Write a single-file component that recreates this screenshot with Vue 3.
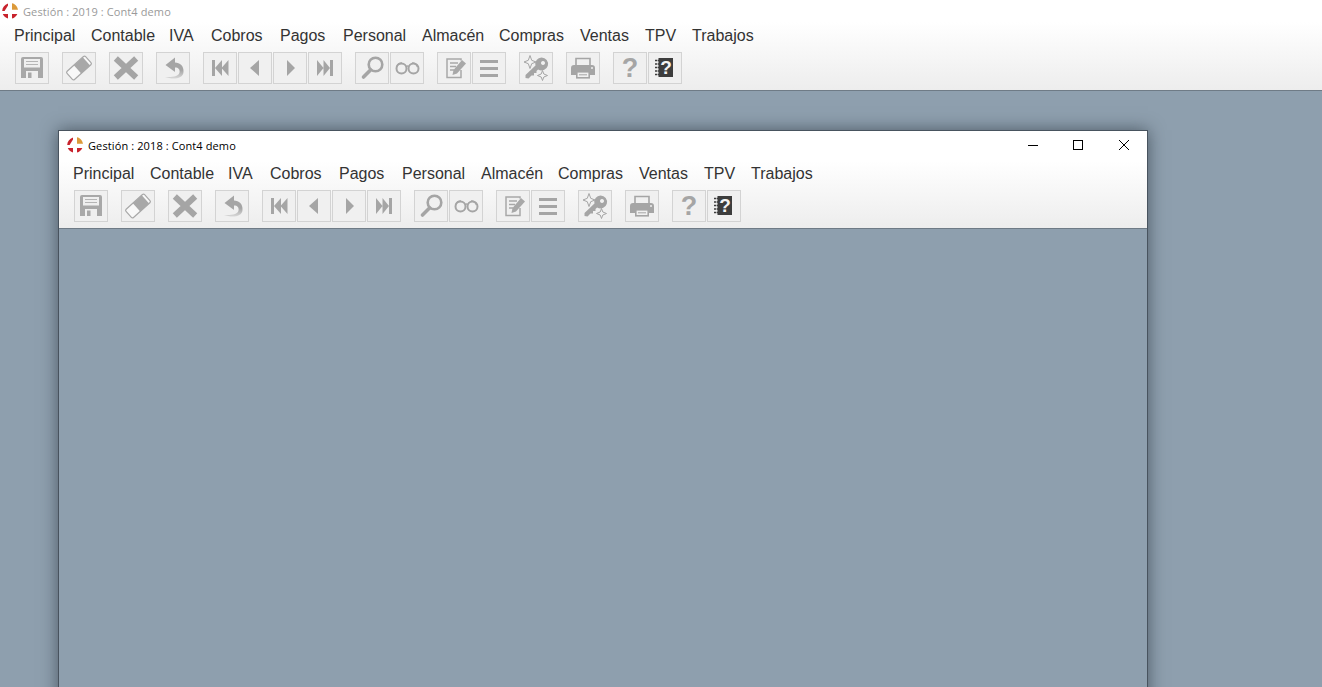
<script setup>
// los dos bloques comparten cabecera: la ventana principal y la ventana hija
const windows = [
  { id: 'main', title: 'Gestión : 2019 : Cont4 demo', child: false },
  { id: 'child', title: 'Gestión : 2018 : Cont4 demo', child: true }
]

const menu = ['Principal', 'Contable', 'IVA', 'Cobros', 'Pagos', 'Personal', 'Almacén', 'Compras', 'Ventas', 'TPV', 'Trabajos']

const toolGroups = [
  ['save'],
  ['eraser'],
  ['cancel'],
  ['undo'],
  ['first', 'prev', 'next', 'last'],
  ['search', 'glasses'],
  ['note', 'list'],
  ['key'],
  ['print'],
  ['help', 'manual']
]
</script>

<template>
  <div class="desktop">
    <svg class="sprites" aria-hidden="true">
      <defs>
        <linearGradient id="undo-fade" x1="0" y1="0" x2="0" y2="1">
          <stop offset="0.6" stop-color="#a5a5a5" />
          <stop offset="1" stop-color="#d8d8d8" />
        </linearGradient>
      </defs>
      <symbol id="logo" viewBox="0 0 16 16">
        <path d="M6 0.6 L6 2.6 L2.6 8 L0.2 8 C0.3 4.6 2.5 1.8 6 0.6Z" fill="#c8222c" />
        <path d="M10 0.2 C13 0.8 15.5 3.5 16 6.8 L10 6.8Z" fill="#dc9a3a" />
        <path d="M0.8 11 L6 11 L6 15.5 C3.5 14.8 1.6 13.2 0.8 11Z" fill="#c8222c" />
        <path d="M10 11 L15.3 11 C14.4 13.2 12.5 14.9 10 15.6Z" fill="#c8222c" />
      </symbol>

      <symbol id="save" viewBox="0 0 34 32">
        <path d="M6 7 a2 2 0 0 1 2-2 H26 a2 2 0 0 1 2 2 V26 H6Z" fill="#a8a8a8" />
        <rect x="9" y="7" width="16" height="8.5" fill="#efefef" />
        <path d="M11 9.5 H23 M11 12.5 H23" stroke="#b5b5b5" stroke-width="1.2" />
        <rect x="11" y="19" width="12" height="7" fill="#efefef" />
        <rect x="13" y="20.5" width="3.5" height="5.5" fill="#a8a8a8" />
      </symbol>
      <symbol id="eraser" viewBox="0 0 34 32">
        <g transform="rotate(-42 17 16)">
          <rect x="4.5" y="10.5" width="25" height="11" rx="1.5" fill="#f8f8f8" stroke="#a8a8a8" stroke-width="1.2" />
          <rect x="15" y="10.5" width="12" height="11" fill="#a8a8a8" />
        </g>
      </symbol>
      <symbol id="cancel" viewBox="0 0 34 32">
        <path d="M9 8.5 L25 23.5 M25 8.5 L9 23.5" stroke="#a5a5a5" stroke-width="6" stroke-linecap="square" />
      </symbol>
      <symbol id="undo" viewBox="0 0 34 32">
        <path d="M19 5.5 L9.5 13 L19 20 V15.5 C22.5 15.5 24 17.5 23.5 20.5 C23 24 17.5 25.5 9 25 C16 27.5 27 27.5 27.5 20 C28 14 24 10.5 19 10.5Z" fill="url(#undo-fade)" />
      </symbol>
      <symbol id="first" viewBox="0 0 34 32">
        <path d="M9 8 H12 V24 H9Z M12 16 L19 8 V24Z M18.5 16 L25.5 8 V24Z" fill="#a5a5a5" />
      </symbol>
      <symbol id="prev" viewBox="0 0 34 32">
        <path d="M21 8 V24 L12 16Z" fill="#a5a5a5" />
      </symbol>
      <symbol id="next" viewBox="0 0 34 32">
        <path d="M14 8 V24 L22 16Z" fill="#a5a5a5" />
      </symbol>
      <symbol id="last" viewBox="0 0 34 32">
        <path d="M22 8 H25 V24 H22Z M22 16 L15.5 8 V24Z M15.5 16 L9 8 V24Z" fill="#a5a5a5" />
      </symbol>
      <symbol id="search" viewBox="0 0 34 32">
        <circle cx="20.5" cy="12.5" r="6.8" fill="none" stroke="#a5a5a5" stroke-width="2.6" />
        <path d="M15.5 18 L8.5 25" stroke="#a5a5a5" stroke-width="3.6" stroke-linecap="round" />
      </symbol>
      <symbol id="glasses" viewBox="0 0 34 32">
        <circle cx="11.5" cy="16.5" r="5" fill="none" stroke="#a5a5a5" stroke-width="2" />
        <circle cx="23.5" cy="16.5" r="5" fill="none" stroke="#a5a5a5" stroke-width="2" />
        <path d="M6.5 15 C7.5 12 9.5 11 12 11 M27.5 15 C26.5 12 24.5 11 22 11 M16 14.5 Q17.5 13.5 19 14.5" fill="none" stroke="#a5a5a5" stroke-width="1.4" />
      </symbol>
      <symbol id="note" viewBox="0 0 34 32">
        <path d="M24 8.5 V7 H10 V25.5 H24 V18" fill="none" stroke="#a8a8a8" stroke-width="1.5" />
        <path d="M13 11 H21 M13 14.5 H19 M13 18 H17" stroke="#a8a8a8" stroke-width="1.4" />
        <path d="M25 8 L29 11.5 L20 21.5 L15.5 23 L16.5 18Z" fill="#a8a8a8" />
      </symbol>
      <symbol id="list" viewBox="0 0 34 32">
        <path d="M8 9.5 H26 M8 16.5 H26 M8 23.5 H26" stroke="#a5a5a5" stroke-width="3.2" />
      </symbol>
      <symbol id="key" viewBox="0 0 34 32">
        <path d="M22.5 5.5 a6.5 6.5 0 1 1-3.4 12 L17.5 19 L17.5 21 L15 21 L15 23.5 L12.5 23.5 L9.5 26.5 L6.5 26 L6.5 23 L16.5 13.5 A6.5 6.5 0 0 1 22.5 5.5Z M24 9 a2 2 0 1 0 0.01 0Z" fill="#a5a5a5" fill-rule="evenodd" />
        <path d="M11 3.5 L12.7 8.3 L17 10 L12.7 11.7 L11 16.5 L9.3 11.7 L5 10 L9.3 8.3Z" fill="#f2f2f2" stroke="#a5a5a5" stroke-width="1" />
        <path d="M23.5 18.5 L24.8 22 L28.5 23.5 L24.8 25 L23.5 28.5 L22.2 25 L18.5 23.5 L22.2 22Z" fill="#f2f2f2" stroke="#a5a5a5" stroke-width="1" />
      </symbol>
      <symbol id="print" viewBox="0 0 34 32">
        <path d="M10 13 V6.5 H24 V13" fill="none" stroke="#a5a5a5" stroke-width="1.6" />
        <path d="M5 20 V16 a3 3 0 0 1 3-3 H26 a3 3 0 0 1 3 3 V23 H24 V19 H10 V23 H5Z" fill="#a5a5a5" />
        <rect x="10.8" y="19.8" width="12.4" height="6" fill="none" stroke="#a5a5a5" stroke-width="1.6" />
        <path d="M13 22.8 H21" stroke="#a5a5a5" stroke-width="1" />
        <circle cx="26" cy="16" r="1" fill="#efefef" />
      </symbol>
      <symbol id="manual" viewBox="0 0 34 32">
        <rect x="10.5" y="6" width="14.5" height="19" fill="#3d3d3d" />
        <path d="M7 8.5 H11 M7 12 H11 M7 15.5 H11 M7 19 H11 M7 22.5 H11" stroke="#3d3d3d" stroke-width="1.5" stroke-dasharray="2 0.6" />
      </symbol>
    </svg>

    <section v-for="win in windows" :key="win.id" class="window" :class="{ child: win.child }">
      <header class="head">
        <div class="titlebar">
          <svg class="logo"><use href="#logo" /></svg>
          <span class="title">{{ win.title }}</span>
          <div v-if="win.child" class="controls">
            <span class="ctl">
              <svg width="10" height="10" viewBox="0 0 10 10"><path d="M0 5.5 H10" stroke="#000" /></svg>
            </span>
            <span class="ctl max">
              <svg width="10" height="10" viewBox="0 0 10 10"><rect x="0.5" y="0.5" width="9" height="9" fill="none" stroke="#000" /></svg>
            </span>
            <span class="ctl close">
              <svg width="10" height="10" viewBox="0 0 10 10"><path d="M0 0 L10 10 M10 0 L0 10" stroke="#000" /></svg>
            </span>
          </div>
        </div>

        <nav class="menu">
          <span v-for="item in menu" :key="item">{{ item }}</span>
        </nav>

        <div class="toolbar">
          <div v-for="(group, i) in toolGroups" :key="i" class="group">
            <button v-for="icon in group" :key="icon" class="tool" type="button">
              <svg v-if="icon !== 'help'" width="32" height="30" viewBox="1 1 32 30"><use :href="`#${icon}`" width="34" height="32" /></svg>
              <span v-if="icon === 'help'" class="mark help">?</span>
              <span v-if="icon === 'manual'" class="mark">?</span>
            </button>
          </div>
        </div>
      </header>
    </section>
  </div>
</template>

<style scoped>
.desktop {
  height: 687px;
  overflow: hidden;
  background: #8e9fae;
  font-family: "Liberation Sans", Arial, sans-serif;
}

.sprites {
  position: absolute;
  width: 0;
  height: 0;
}

.window.child {
  width: 1090px;
  height: 640px;
  box-sizing: border-box;
  margin: 39px 0 0 58px;
  border: 1px solid #48535e;
  border-bottom: 0;
  box-shadow: 0 0 16px rgba(40, 50, 60, 0.65);
}

.head {
  height: 90px;
  border-bottom: 1px solid #6f7b86;
  background: linear-gradient(to bottom, #fff 0, #fff 22px, #ededed 100%);
}

.child .head {
  height: 97px;
  background: linear-gradient(to bottom, #fff 0, #fff 30px, #ededed 100%);
}

.titlebar {
  height: 22px;
  display: flex;
  align-items: center;
  padding-left: 2px;
  padding-bottom: 2px;
  font-family: "Open Sans", "Noto Sans", sans-serif;
  font-size: 11px;
  letter-spacing: 0.11px;
  color: #9a9a9a;
}

.child .titlebar {
  height: 28px;
  padding-left: 8px;
  padding-bottom: 3px;
  color: #000;
}

.logo {
  width: 16px;
  height: 16px;
  margin-right: 5px;
}

.title {
  width: 160px;
  white-space: nowrap;
}

.controls {
  display: flex;
  margin-left: auto;
}

.ctl {
  width: 45px;
  display: flex;
  justify-content: center;
  align-items: center;
}

.ctl.max {
  margin-right: 1px;
}

.ctl.close {
  width: 46px;
}

.menu {
  display: grid;
  grid-template-columns: 77px 78px 42px 69px 63px 79px 77px 81px 65px 47px auto;
  height: 22px;
  margin-top: 1px;
  align-items: center;
  padding-left: 14px;
  font-size: 16px;
  color: #333;
  white-space: nowrap;
}

.toolbar {
  display: flex;
  gap: 13px;
  margin-top: 5px;
  padding-left: 15px;
}

.group {
  display: flex;
  gap: 1px;
}

.tool {
  position: relative;
  width: 34px;
  height: 32px;
  padding: 0;
  display: block;
  border: 1px solid #d3d3d3;
  background: #f0f0f0;
}

.tool svg {
  display: block;
}

.mark {
  position: absolute;
  top: 3px;
  left: 8px;
  width: 18px;
  text-align: center;
  font-family: "Liberation Sans", Arial, sans-serif;
  font-weight: 700;
  font-size: 19px;
  line-height: 24px;
  color: #f4f4f4;
}

.mark.help {
  top: 0;
  left: 7px;
  font-size: 27px;
  line-height: 30px;
  color: #a5a5a5;
}
</style>

<style>
html,
body {
  margin: 0;
  overflow: hidden;
  background: #8e9fae;
}
</style>
